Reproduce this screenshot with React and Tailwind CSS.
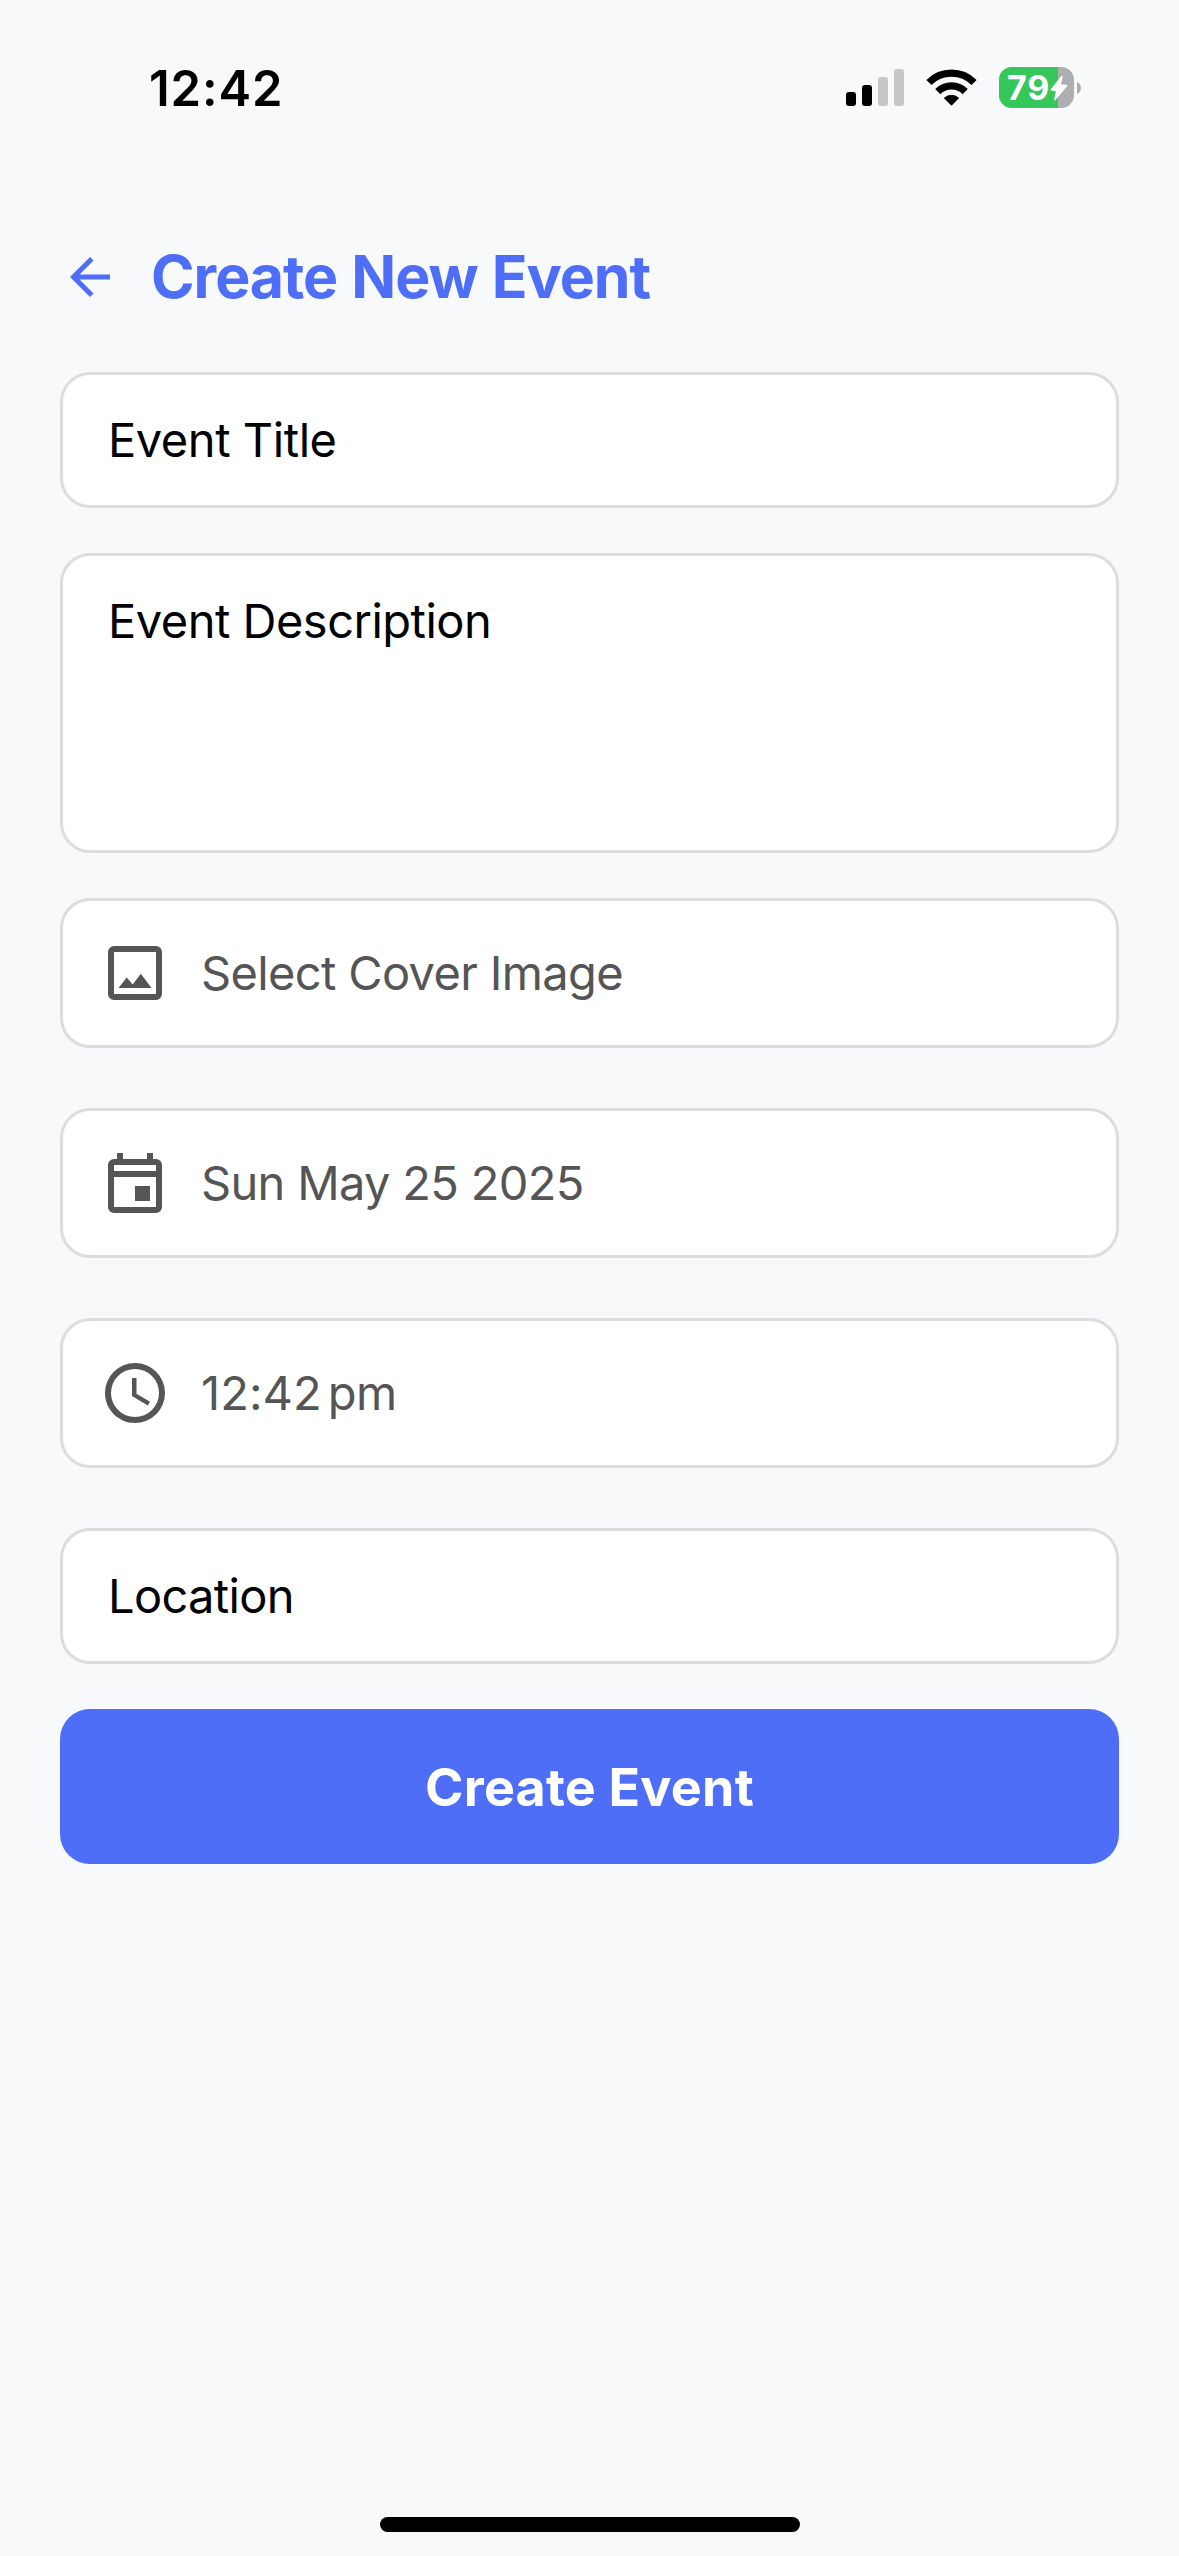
function SignalIcon() {
  return (
    <svg className="h-[38px] w-[58px]" viewBox="0 0 58 38">
      <rect x="0" y="23" width="10" height="14" rx="3" fill="#000" />
      <rect x="16" y="16" width="10" height="21" rx="3" fill="#000" />
      <rect x="32" y="8" width="10" height="29" rx="3" fill="#c6c7c9" />
      <rect x="48" y="0" width="10" height="37" rx="3" fill="#c6c7c9" />
    </svg>
  );
}

function WifiIcon() {
  return (
    <svg className="h-[38px] w-[51px]" viewBox="0 0 51 38" fill="none">
      <path d="M2.9 13.5A32 32 0 0 1 48.1 13.5" stroke="#000" strokeWidth="7.2" />
      <path d="M11.8 22.6A19.4 19.4 0 0 1 39.2 22.6" stroke="#000" strokeWidth="7.2" />
      <path
        d="M18.4 29A10.9 10.9 0 0 1 32.6 29L25.5 36.2Z"
        fill="#000"
        stroke="#000"
        strokeWidth="1"
        strokeLinejoin="round"
      />
    </svg>
  );
}

function Battery() {
  return (
    <div className="flex items-center gap-[3px]">
      <div className="relative flex h-[41px] w-[75px] items-center overflow-hidden rounded-[13px] bg-[#adaeb0]">
        <div className="absolute inset-y-0 left-0 w-[59px] bg-[#35c759]" />
        <span className="relative pl-[8px] text-[34px] leading-[41px] font-bold tracking-[0.8px] text-white">79</span>
        <svg className="absolute top-[8px] left-[51px] h-[27px] w-[18px]" viewBox="0 0 18 27">
          <path
            d="M12 1.6L9.9 10L16.6 10.6L4.9 24.6L6.8 15.6L1.4 14.8Z"
            fill="#fff"
            stroke="#fff"
            strokeWidth="1.6"
            strokeLinejoin="round"
          />
        </svg>
      </div>
      <svg className="h-[12px] w-[4px]" viewBox="0 0 4 12">
        <path d="M0 0C2.4 1 4 3.300 4 6C4 8.700 2.400 11 0 12Z" fill="#adaeb0" />
      </svg>
    </div>
  );
}

function StatusBar() {
  return (
    <div className="flex h-[175px] items-center justify-between pr-[98px] pl-[149px]">
      <span className="pt-[2px] text-[49px] leading-[60px] font-semibold tracking-[0.87px] text-black">12:42</span>
      <div className="flex items-center gap-[22px]">
        <SignalIcon />
        <WifiIcon />
        <Battery />
      </div>
    </div>
  );
}

function Icon({ d, className }) {
  return (
    <svg className={className} viewBox="0 0 24 24" fill="currentColor">
      <path d={d} />
    </svg>
  );
}

const ARROW_BACK = "M20 11H7.83l5.59-5.59L12 4l-8 8 8 8 1.41-1.41L7.83 13H20v-2z";
const IMAGE =
  "M19 19H5V5h14m0-2H5a2 2 0 0 0-2 2v14a2 2 0 0 0 2 2h14a2 2 0 0 0 2-2V5a2 2 0 0 0-2-2m-5.04 9.29-2.75 3.54-1.96-2.36L6.5 17h11l-3.54-4.71z";
const EVENT =
  "M19 4h-1V2h-2v2H8V2H6v2H5a2 2 0 0 0-2 2v14a2 2 0 0 0 2 2h14a2 2 0 0 0 2-2V6a2 2 0 0 0-2-2zm0 16H5V10h14v10zm0-12H5V6h14v2zM12 13h5v5h-5z";
const CLOCK =
  "M12 20a8 8 0 0 0 8-8 8 8 0 0 0-8-8 8 8 0 0 0-8 8 8 8 0 0 0 8 8m0-18a10 10 0 0 1 10 10 10 10 0 0 1-10 10C6.47 22 2 17.5 2 12A10 10 0 0 1 12 2m.5 5v5.25l4.5 2.67-.75 1.23L11 13V7h1.5z";

function Field({ className, children }) {
  return (
    <div
      className={`flex rounded-[30px] border-[3px] border-[#ddd] bg-white pl-[45px] text-[47px] leading-[58px] text-black ${className}`}
    >
      {children}
    </div>
  );
}

function Picker({ icon, tracking, children }) {
  return (
    <button className="flex h-[150px] items-center gap-[30px] rounded-[30px] border-[3px] border-[#ddd] bg-white pl-[36px] text-left text-[47px] leading-[58px] text-[#555]">
      <Icon d={icon} className="size-[72px]" />
      <span className={tracking}>{children}</span>
    </button>
  );
}

export default function App() {
  return (
    <div className="flex h-[2556px] w-[1179px] flex-col bg-[#f8f9fb] font-['Inter',sans-serif]">
      <StatusBar />
      <main className="flex flex-1 flex-col px-[60px] pt-[72px]">
        <header className="flex h-[60px] items-center gap-[31px] text-[#4f6ef7]">
          <Icon d={ARROW_BACK} className="size-[60px]" />
          <h1 className="text-[59px] leading-[60px] font-bold tracking-[-1.05px] [word-spacing:1.2px]">
            Create New Event
          </h1>
        </header>

        <Field className="mt-[65px] h-[136px] items-center">
          <span className="tracking-[-0.44px]">Event Title</span>
        </Field>
        <Field className="mt-[45px] h-[300px] items-start pt-[36px]">
          <span className="tracking-[-0.5px]">Event Description</span>
        </Field>

        <div className="mt-[45px] flex flex-col gap-[60px]">
          <Picker icon={IMAGE} tracking="tracking-[-0.65px]">Select Cover Image</Picker>
          <Picker icon={EVENT} tracking="tracking-[-0.68px]">Sun May 25 2025</Picker>
          <Picker icon={CLOCK} tracking="tracking-[0.1px] [word-spacing:-2px]">
            12:42<span className="tracking-[-2.6px]">{"\u202f"}</span>
            <span className="tracking-[-0.6px]">pm</span>
          </Picker>
          <Field className="h-[136px] items-center">
            <span className="tracking-[-0.68px]">Location</span>
          </Field>
        </div>

        <button className="mt-[45px] flex h-[155px] items-center justify-center rounded-[30px] bg-[#4f6ef7] pt-[2px] text-[52px] leading-[64px] font-bold tracking-[0.23px] text-white">
          Create Event
        </button>
      </main>
      <div className="mb-[24px] h-[15px] w-[420px] self-center rounded-full bg-black" />
    </div>
  );
}
